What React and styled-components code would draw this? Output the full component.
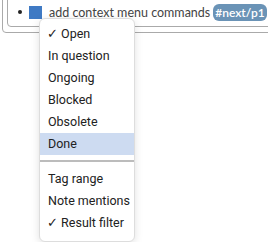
import React from "react";
import styled, { createGlobalStyle } from "styled-components";

const Global = createGlobalStyle`
  html, body { margin: 0; padding: 0; background: #fff; overflow: hidden; }
  body { width: 268px; height: 242px; }
`;

const Stage = styled.div`
  position: relative;
  width: 268px;
  height: 242px;
  overflow: hidden;
`;

const OuterBox = styled.div`
  margin: -10px -40px 0 2px;
  border: 1px solid #aaa;
  border-radius: 4px;
  padding: 0 0 5px 4px;
`;

const InnerBox = styled.div`
  box-sizing: border-box;
  height: 36px;
  border: 1px solid #aaa;
  border-radius: 4px;
  padding-top: 11px;
`;

const Row = styled.div`
  display: flex;
  align-items: center;
  height: 18px;
  padding-left: 10px;
  font-family: Lato, "Liberation Sans", sans-serif;
  font-size: 12.5px;
  color: #444;
  white-space: nowrap;
`;

const Bullet = styled.span`
  width: 4px;
  height: 4px;
  border-radius: 50%;
  background: #222;
  margin-right: 7px;
`;

const Square = styled.span`
  width: 13px;
  height: 13px;
  background: #3f7ac4;
  margin-right: 7px;
`;

const Tag = styled.span`
  margin-left: 3px;
  background: #6a93b6;
  color: #fff;
  border-radius: 6px;
  padding: 0 2px;
  height: 17px;
  line-height: 17px;
  font-size: 12px;
  font-weight: 600;
`;

const Menu = styled.div`
  position: absolute;
  left: 39px;
  top: 18px;
  width: 94px;
  background: #fff;
  border: 1px solid #ddd;
  border-radius: 6px;
  box-shadow: 0 2px 8px rgba(0, 0, 0, 0.12);
  padding: 4px 0 7px;
  font-family: Roboto, "Liberation Sans", sans-serif;
  font-size: 12.5px;
  color: #222;
`;

const Item = styled.div`
  height: 22px;
  line-height: 22px;
  padding-left: ${(p) => (p.$checked ? "7px" : "8px")};
  background: ${(p) => (p.$active ? "#cddbf1" : "transparent")};
  white-space: nowrap;
`;

const Separator = styled.div`
  height: 2px;
  background: #bcbcbc;
  margin: 5px 0 6px;
`;

const top = [
  { label: "Open", checked: true },
  { label: "In question" },
  { label: "Ongoing" },
  { label: "Blocked" },
  { label: "Obsolete" },
  { label: "Done", active: true },
];
const bottom = [
  { label: "Tag range" },
  { label: "Note mentions" },
  { label: "Result filter", checked: true },
];

function MenuItem({ label, checked, active }) {
  return (
    <Item $checked={checked} $active={active}>
      {checked ? "✓ " : ""}
      {label}
    </Item>
  );
}

export default function App() {
  return (
    <Stage>
      <Global />
      <OuterBox>
        <InnerBox>
          <Row>
            <Bullet />
            <Square />
            add context menu commands
            <Tag>#next/p1</Tag>
          </Row>
        </InnerBox>
      </OuterBox>
      <Menu>
        {top.map((i) => (
          <MenuItem key={i.label} {...i} />
        ))}
        <Separator />
        {bottom.map((i) => (
          <MenuItem key={i.label} {...i} />
        ))}
      </Menu>
    </Stage>
  );
}
